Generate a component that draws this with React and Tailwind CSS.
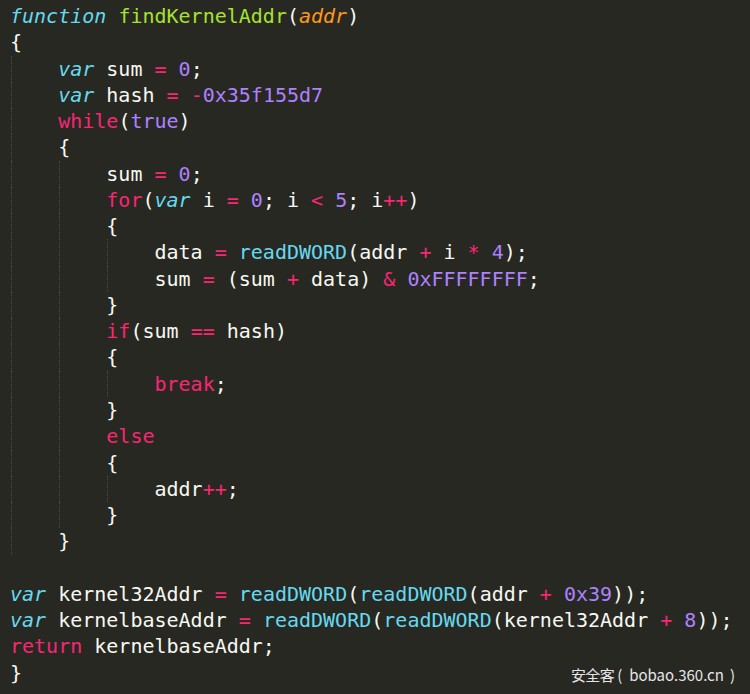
import React from "react";

const C = {
  t: "text-[#f8f8f2]",
  k: "text-[#66d9ef] italic",
  f: "text-[#a6e22e]",
  p: "text-[#fd971f] italic",
  o: "text-[#f92672]",
  n: "text-[#ae81ff]",
  c: "text-[#66d9ef]",
};

// [indentLevel, tokens]
const L = [
  [0, [["k", "function"], ["t", " "], ["f", "findKernelAddr"], ["t", "("], ["p", "addr"], ["t", ")"]]],
  [0, [["t", "{"]]],
  [1, [["k", "var"], ["t", " sum "], ["o", "="], ["t", " "], ["n", "0"], ["t", ";"]]],
  [1, [["k", "var"], ["t", " hash "], ["o", "="], ["t", " "], ["o", "-"], ["n", "0x35f155d7"]]],
  [1, [["o", "while"], ["t", "("], ["n", "true"], ["t", ")"]]],
  [1, [["t", "{"]]],
  [2, [["t", "sum "], ["o", "="], ["t", " "], ["n", "0"], ["t", ";"]]],
  [2, [["o", "for"], ["t", "("], ["k", "var"], ["t", " i "], ["o", "="], ["t", " "], ["n", "0"], ["t", "; i "], ["o", "<"], ["t", " "], ["n", "5"], ["t", "; i"], ["o", "++"], ["t", ")"]]],
  [2, [["t", "{"]]],
  [3, [["t", "data "], ["o", "="], ["t", " "], ["c", "readDWORD"], ["t", "(addr "], ["o", "+"], ["t", " i "], ["o", "*"], ["t", " "], ["n", "4"], ["t", ");"]]],
  [3, [["t", "sum "], ["o", "="], ["t", " (sum "], ["o", "+"], ["t", " data) "], ["o", "&"], ["t", " "], ["n", "0xFFFFFFFF"], ["t", ";"]]],
  [2, [["t", "}"]]],
  [2, [["o", "if"], ["t", "(sum "], ["o", "=="], ["t", " hash)"]]],
  [2, [["t", "{"]]],
  [3, [["o", "break"], ["t", ";"]]],
  [2, [["t", "}"]]],
  [2, [["o", "else"]]],
  [2, [["t", "{"]]],
  [3, [["t", "addr"], ["o", "++"], ["t", ";"]]],
  [2, [["t", "}"]]],
  [1, [["t", "}"]]],
  [0, []],
  [0, [["k", "var"], ["t", " kernel32Addr "], ["o", "="], ["t", " "], ["c", "readDWORD"], ["t", "("], ["c", "readDWORD"], ["t", "(addr "], ["o", "+"], ["t", " "], ["n", "0x39"], ["t", "));"]]],
  [0, [["k", "var"], ["t", " kernelbaseAddr "], ["o", "="], ["t", " "], ["c", "readDWORD"], ["t", "("], ["c", "readDWORD"], ["t", "(kernel32Addr "], ["o", "+"], ["t", " "], ["n", "8"], ["t", "));"]]],
  [0, [["o", "return"], ["t", " kernelbaseAddr;"]]],
  [0, [["t", "}"]]],
];

export default function App() {
  return (
    <div className="relative h-[694px] w-[750px] overflow-hidden bg-[#272822]">
      <div
        className="pl-[10px] pt-[3px] text-[20px] leading-[26.28px] text-[#f8f8f2]"
        style={{ fontFamily: '"DejaVu Sans Mono", "Liberation Mono", monospace' }}
      >
        {L.map(([ind, toks], i) => (
          <div key={i} className="flex h-[26.28px] whitespace-pre">
            {Array.from({ length: ind }).map((_, j) => (
              <span key={j} className="flex h-full w-[48.16px] shrink-0">
                <span className="ml-px h-full border-l border-dotted border-[#4a4b43]" />
              </span>
            ))}
            <span>
              {toks.map(([c, s], k) => (
                <span key={k} className={C[c]}>
                  {s}
                </span>
              ))}
            </span>
          </div>
        ))}
      </div>
      <div
        className="absolute right-[15px] top-[664px] flex items-center text-[15px] text-[#e6e6e6]"
        style={{ fontFamily: '"Noto Sans CJK SC", "Noto Sans", sans-serif' }}
      >
        <span className="tracking-[-0.6px]">安全客</span>
        <span className="ml-[3px] mr-[7px]">(</span>
        <span>bobao.360.cn</span>
        <span className="ml-[6px]">)</span>
      </div>
    </div>
  );
}
